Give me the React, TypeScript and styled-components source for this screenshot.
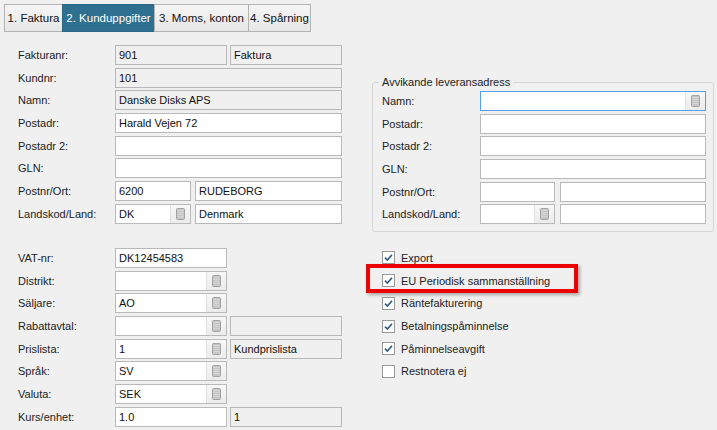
import styled, { createGlobalStyle } from 'styled-components';

const GlobalStyle = createGlobalStyle`
  html, body {
    margin: 0;
    padding: 0;
    background: #f0f0f0;
  }
  #root {
    width: 717px;
    height: 430px;
    overflow: hidden;
  }
`;

const ROW_GAP = '2.7px';

const Page = styled.div`
  width: 717px;
  height: 430px;
  background: #f0f0f0;
  font-family: 'Liberation Sans', Arial, sans-serif;
  color: #1e1e1e;
  box-sizing: border-box;
  padding-top: 4px;
`;

const TabBar = styled.div`
  display: flex;
  padding-left: 4px;
  height: 28px;
`;

const Tab = styled.div<{ $active?: boolean; $w: number }>`
  display: flex;
  align-items: center;
  justify-content: center;
  box-sizing: border-box;
  height: 28px;
  width: ${({ $w }) => $w}px;
  font-size: 11.5px;
  border: 1px solid ${({ $active }) => ($active ? '#2b6785' : '#b3b3b3')};
  margin-left: -1px;
  background: ${({ $active }) =>
    $active ? '#2f6f90' : 'linear-gradient(#f6f6f6, #e6e6e6)'};
  color: ${({ $active }) => ($active ? '#fff' : '#111')};
  &:first-child {
    margin-left: 0;
  }
`;

const Content = styled.div`
  display: grid;
  grid-template-columns: 324px 342px;
  column-gap: 30px;
  row-gap: 15.5px;
  padding: 13px 0 0 18px;
`;

const Form = styled.div`
  display: flex;
  flex-direction: column;
  gap: ${ROW_GAP};
`;

const Row = styled.div<{ $label: number }>`
  display: grid;
  grid-template-columns: ${({ $label }) => $label}px 1fr;
  height: 20px;
  align-items: center;
`;

const Label = styled.span`
  font-size: 11px;
  color: #222;
  white-space: nowrap;
`;

const Fields = styled.div`
  display: flex;
  height: 20px;
  gap: 3px;
`;

const Box = styled.div<{ $w?: number; $ro?: boolean; $focus?: boolean; $gapLeft?: number }>`
  box-sizing: border-box;
  height: 20px;
  width: ${({ $w }) => ($w ? `${$w}px` : 'auto')};
  flex: ${({ $w }) => ($w ? 'none' : '1')};
  margin-left: ${({ $gapLeft }) => $gapLeft ?? 0}px;
  display: flex;
  align-items: stretch;
  border: 1px solid ${({ $focus, $ro }) => ($focus ? '#5a9fe6' : $ro ? '#b7b7b7' : '#b9b9b9')};
  background: ${({ $ro }) => ($ro ? '#f0f0f0' : '#fff')};
`;

const Value = styled.span`
  flex: 1;
  display: flex;
  align-items: center;
  padding-left: 3px;
  font-size: 11px;
  color: #111;
  white-space: nowrap;
  overflow: hidden;
`;

const PickButton = styled.span`
  width: 19px;
  display: flex;
  align-items: center;
  justify-content: center;
  border-left: 1px solid #e0e0e0;
  background: linear-gradient(#f7f7f7, #ececec);
`;

const GroupBox = styled.div`
  position: relative;
  margin-top: 37px;
  border: 1px solid #d6d6d6;
  border-radius: 3px;
  padding: 8px 7px 7px 9px;
  display: flex;
  flex-direction: column;
  gap: ${ROW_GAP};
`;

const Legend = styled.span`
  position: absolute;
  top: -8px;
  left: 6px;
  padding: 0 3px;
  background: #f0f0f0;
  font-size: 11px;
  color: #222;
  line-height: 14px;
`;

const CheckList = styled.div`
  position: relative;
  display: flex;
  flex-direction: column;
  gap: ${ROW_GAP};
  padding-left: 10px;
`;

const CheckRow = styled.div`
  height: 20px;
  display: flex;
  align-items: center;
  gap: 6px;
  font-size: 11px;
  color: #222;
`;

const CheckBox = styled.span`
  box-sizing: border-box;
  width: 13px;
  height: 13px;
  border: 1px solid #9a9a9a;
  background: #fff;
  display: flex;
  align-items: center;
  justify-content: center;
`;

const Highlight = styled.div`
  position: absolute;
  left: -6px;
  top: 16px;
  width: 212px;
  height: 29px;
  box-sizing: border-box;
  border: 4px solid #ec0000;
  box-shadow: 2px 2px 3px rgba(0, 0, 0, 0.3);
  pointer-events: none;
`;

function ListIcon() {
  return (
    <svg width="9" height="12" viewBox="0 0 9 12">
      <rect x="0.5" y="0.5" width="8" height="11" rx="1" fill="#c6c6c6" stroke="#a2a2a2" />
      {[2.5, 4.5, 6.5, 8.5].map((y) => (
        <line key={y} x1="1.5" x2="7.5" y1={y} y2={y} stroke="#dadada" strokeWidth="0.8" />
      ))}
    </svg>
  );
}

function CheckMark() {
  return (
    <svg width="11" height="11" viewBox="0 0 11 11">
      <path d="M2 5.6 L4.4 8 L9 2.8" fill="none" stroke="#2d5a86" strokeWidth="1.6" />
    </svg>
  );
}

type FieldSpec = { w?: number; value?: string; ro?: boolean; pick?: boolean; focus?: boolean; gapLeft?: number };

function Field({ w, value, ro, pick, focus, gapLeft }: FieldSpec) {
  return (
    <Box $w={w} $ro={ro} $focus={focus} $gapLeft={gapLeft}>
      <Value>{value}</Value>
      {pick ? (
        <PickButton>
          <ListIcon />
        </PickButton>
      ) : null}
    </Box>
  );
}

type RowSpec = { label: string; fields: FieldSpec[] };

const topRows: RowSpec[] = [
  { label: 'Fakturanr:', fields: [{ w: 112, value: '901', ro: true }, { w: 112, value: 'Faktura', ro: true }] },
  { label: 'Kundnr:', fields: [{ value: '101', ro: true }] },
  { label: 'Namn:', fields: [{ value: 'Danske Disks APS', ro: true }] },
  { label: 'Postadr:', fields: [{ value: 'Harald Vejen 72' }] },
  { label: 'Postadr 2:', fields: [{}] },
  { label: 'GLN:', fields: [{}] },
  { label: 'Postnr/Ort:', fields: [{ w: 76, value: '6200' }, { value: 'RUDEBORG', gapLeft: 1 }] },
  { label: 'Landskod/Land:', fields: [{ w: 76, value: 'DK', pick: true }, { value: 'Denmark', gapLeft: 1 }] },
];

const deliveryRows: RowSpec[] = [
  { label: 'Namn:', fields: [{ pick: true, focus: true }] },
  { label: 'Postadr:', fields: [{}] },
  { label: 'Postadr 2:', fields: [{}] },
  { label: 'GLN:', fields: [{}] },
  { label: 'Postnr/Ort:', fields: [{ w: 75 }, { gapLeft: 2 }] },
  { label: 'Landskod/Land:', fields: [{ w: 75, pick: true }, { gapLeft: 2 }] },
];

const lowerRows: RowSpec[] = [
  { label: 'VAT-nr:', fields: [{ w: 112, value: 'DK12454583' }] },
  { label: 'Distrikt:', fields: [{ w: 112, pick: true }] },
  { label: 'Säljare:', fields: [{ w: 112, value: 'AO', pick: true }] },
  { label: 'Rabattavtal:', fields: [{ w: 112, pick: true }, { w: 112, ro: true }] },
  { label: 'Prislista:', fields: [{ w: 112, value: '1', pick: true }, { w: 112, value: 'Kundprislista', ro: true }] },
  { label: 'Språk:', fields: [{ w: 112, value: 'SV', pick: true }] },
  { label: 'Valuta:', fields: [{ w: 112, value: 'SEK', pick: true }] },
  { label: 'Kurs/enhet:', fields: [{ w: 112, value: '1.0' }, { w: 112, value: '1', ro: true }] },
];

const checks = [
  { label: 'Export', on: true },
  { label: 'EU Periodisk sammanställning', on: true },
  { label: 'Räntefakturering', on: true },
  { label: 'Betalningspåminnelse', on: true },
  { label: 'Påminnelseavgift', on: true },
  { label: 'Restnotera ej', on: false },
];

const tabs = [
  { label: '1. Faktura', w: 59 },
  { label: '2. Kunduppgifter', w: 93 },
  { label: '3. Moms, konton', w: 95 },
  { label: '4. Spårning', w: 63 },
];

function FormRows({ rows, labelWidth }: { rows: RowSpec[]; labelWidth: number }) {
  return (
    <>
      {rows.map((row) => (
        <Row key={row.label} $label={labelWidth}>
          <Label>{row.label}</Label>
          <Fields>
            {row.fields.map((f, i) => (
              <Field key={i} {...f} />
            ))}
          </Fields>
        </Row>
      ))}
    </>
  );
}

export default function App() {
  return (
    <Page>
      <GlobalStyle />
      <TabBar>
        {tabs.map((t, i) => (
          <Tab key={t.label} $active={i === 1} $w={t.w}>
            {t.label}
          </Tab>
        ))}
      </TabBar>

      <Content>
        <Form>
          <FormRows rows={topRows} labelWidth={97} />
        </Form>

        <GroupBox>
          <Legend>Avvikande leveransadress</Legend>
          <FormRows rows={deliveryRows} labelWidth={98} />
        </GroupBox>

        <Form>
          <FormRows rows={lowerRows} labelWidth={97} />
        </Form>

        <CheckList>
          {checks.map((c) => (
            <CheckRow key={c.label}>
              <CheckBox>{c.on ? <CheckMark /> : null}</CheckBox>
              {c.label}
            </CheckRow>
          ))}
          <Highlight />
        </CheckList>
      </Content>
    </Page>
  );
}
